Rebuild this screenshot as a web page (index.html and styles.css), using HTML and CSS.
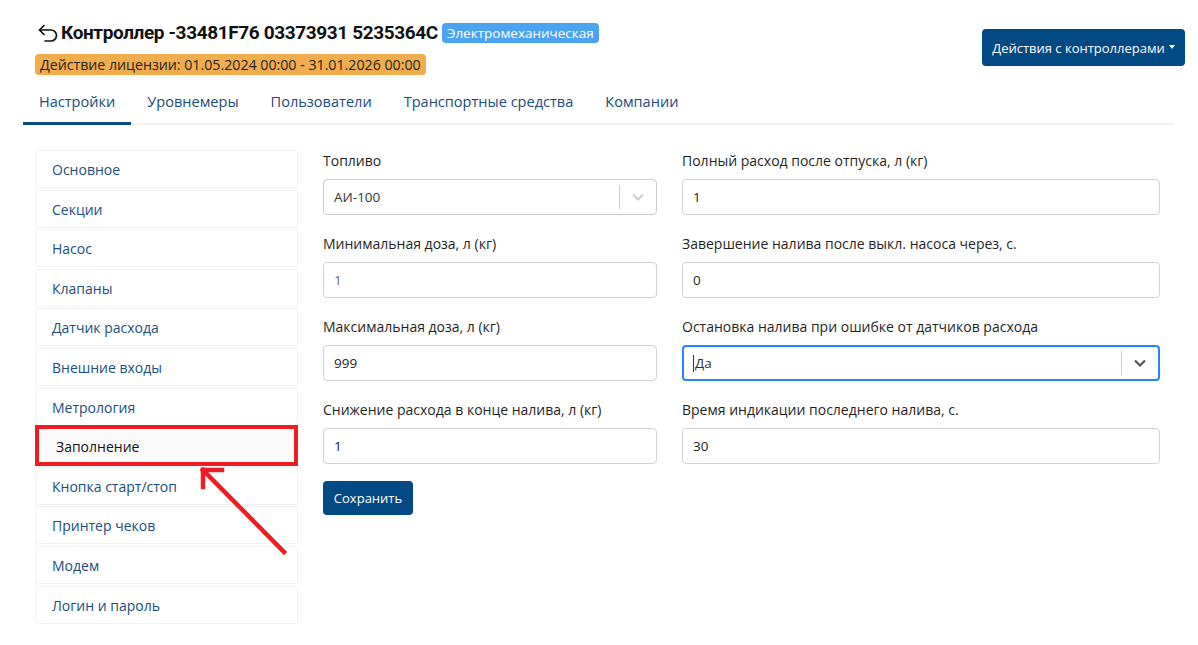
FILE: index.html
```html
<!DOCTYPE html>
<html lang="ru">
<head>
<meta charset="utf-8">
<title>Контроллер</title>
<link rel="stylesheet" href="styles.css">
</head>
<body>
<div class="page">
  <div class="header">
    <div class="header-left">
      <div class="title-row">
        <svg class="back" width="22" height="18" viewBox="0 0 22 18" fill="none" stroke="#111" stroke-width="1.7" stroke-linecap="round" stroke-linejoin="round">
          <path d="M2.5 6 H14 A5.5 5.5 0 0 1 14 17 H8"/>
          <path d="M7 1.5 L2.5 6 L7 10.5"/>
        </svg>
        <h1 class="title">Контроллер -33481F76 03373931 5235364С</h1>
        <span class="badge-type">Электромеханическая</span>
      </div>
      <div class="license">Действие лицензии: 01.05.2024 00:00 - 31.01.2026 00:00</div>
    </div>
    <button class="actions-btn">Действия с контроллерами<span class="caret"></span></button>
  </div>

  <nav class="tabs">
    <a class="tab active">Настройки</a>
    <a class="tab">Уровнемеры</a>
    <a class="tab">Пользователи</a>
    <a class="tab">Транспортные средства</a>
    <a class="tab">Компании</a>
  </nav>

  <div class="content">
    <ul class="side">
      <li class="side-item">Основное</li>
      <li class="side-item">Секции</li>
      <li class="side-item">Насос</li>
      <li class="side-item">Клапаны</li>
      <li class="side-item">Датчик расхода</li>
      <li class="side-item">Внешние входы</li>
      <li class="side-item">Метрология</li>
      <li class="side-item current">Заполнение</li>
      <li class="side-item">Кнопка старт/стоп</li>
      <li class="side-item">Принтер чеков</li>
      <li class="side-item">Модем</li>
      <li class="side-item">Логин и пароль</li>
      <li class="mark-box"></li>
      <li class="mark-arrow">
        <svg width="100" height="100" viewBox="0 0 100 100" fill="none" stroke="#ee1c25" stroke-width="4.5" stroke-linecap="square">
          <path d="M5 5 L86 87"/>
          <path d="M5 5 H24"/>
          <path d="M5 5 V22"/>
        </svg>
      </li>
    </ul>

    <form class="form">
      <div class="col col-left">
        <div class="group">
          <label class="label">Топливо</label>
          <div class="select">
            <span class="select-value">АИ-100</span>
            <span class="sep"></span>
            <svg class="chev" width="14" height="10" viewBox="0 0 14 10"><path d="M2 2.5 L7 7.5 L12 2.5" fill="none" stroke="#cccccc" stroke-width="2.2"/></svg>
          </div>
        </div>
        <div class="group">
          <label class="label">Минимальная доза, л (кг)</label>
          <div class="input muted">1</div>
        </div>
        <div class="group">
          <label class="label">Максимальная доза, л (кг)</label>
          <div class="input">999</div>
        </div>
        <div class="group">
          <label class="label">Снижение расхода в конце налива, л (кг)</label>
          <div class="input">1</div>
        </div>
        <button type="button" class="save">Сохранить</button>
      </div>
      <div class="col col-right">
        <div class="group">
          <label class="label">Полный расход после отпуска, л (кг)</label>
          <div class="input">1</div>
        </div>
        <div class="group">
          <label class="label">Завершение налива после выкл. насоса через, с.</label>
          <div class="input">0</div>
        </div>
        <div class="group">
          <label class="label">Остановка налива при ошибке от датчиков расхода</label>
          <div class="select focused">
            <span class="select-value"><span class="cursor"></span>Да</span>
            <span class="sep"></span>
            <svg class="chev" width="14" height="10" viewBox="0 0 14 10"><path d="M2 2.5 L7 7.5 L12 2.5" fill="none" stroke="#555" stroke-width="2.2"/></svg>
          </div>
        </div>
        <div class="group">
          <label class="label">Время индикации последнего налива, с.</label>
          <div class="input">30</div>
        </div>
      </div>
    </form>
  </div>
</div>
</body>
</html>
```
FILE: styles.css
```css
* { box-sizing: border-box; }
html, body { margin: 0; padding: 0; background: #fff; }
body {
  font-family: "Open Sans", "Noto Sans", sans-serif;
  font-size: 14px;
  color: #212529;
}
.page {
  padding: 0 13px 0 23px;
}
.header {
  display: flex;
  justify-content: space-between;
  align-items: flex-start;
  padding-left: 12px;
}
.header-left {
  padding-top: 20px;
}
.title-row {
  display: flex;
  align-items: center;
  height: 26px;
}
.back {
  margin: 0 2px 0 2px;
  flex: none;
}
.title {
  margin: 0;
  font-family: "Roboto", "Liberation Sans", sans-serif;
  font-weight: 700;
  font-size: 19px;
  line-height: 26px;
  color: #111;
  letter-spacing: -0.38px;
}
.badge-type {
  margin-left: 4px;
  background: #4ba3ef;
  color: #fff;
  font-size: 13.5px;
  line-height: 20px;
  padding: 0 5px;
  border-radius: 4px;
}
.license {
  display: inline-block;
  margin-top: 8px;
  background: #f0ad4e;
  color: #1f1f1f;
  font-size: 14.2px;
  line-height: 21px;
  padding: 0 5px;
  border-radius: 4px;
}
.actions-btn {
  margin-top: 29px;
  height: 37px;
  width: 203px;
  padding: 0 8px;
  background: #024a84;
  color: #fff;
  border: none;
  border-radius: 4px;
  font-family: "Open Sans", sans-serif;
  font-size: 13px;
  display: flex;
  align-items: center;
  justify-content: center;
  white-space: nowrap;
}
.caret {
  display: inline-block;
  margin-left: 4px;
  border-top: 4px solid #fff;
  border-left: 3.5px solid transparent;
  border-right: 3.5px solid transparent;
  margin-top: -2px;
}
.tabs {
  display: flex;
  margin-top: 8px;
  margin-right: 12px;
  border-bottom: 2px solid #f2f2f2;
}
.tab {
  padding: 8px 16px 10px;
  line-height: 21px;
  font-size: 14.55px;
  color: #1a4b79;
  border-bottom: 3px solid transparent;
  margin-bottom: -2px;
}
.tab.active {
  border-bottom-color: #0a4b83;
}
.content {
  display: flex;
  gap: 25px;
  margin-top: 25px;
  padding-left: 12px;
}
.side {
  list-style: none;
  margin: 0;
  padding: 0;
  width: 263px;
  flex: none;
  position: relative;
  display: flex;
  flex-direction: column;
  gap: 1.6px;
}
.side-item {
  height: 38px;
  line-height: 37px;
  padding-left: 16px;
  border: 1px solid #f2f2f2;
  border-radius: 2px;
  color: #1b4d7e;
  font-size: 14px;
}
.side-item.current {
  background: #fafafa;
  color: #111;
  padding-left: 20px;
}
.mark-box {
  position: absolute;
  left: 0;
  top: 275px;
  width: 263px;
  height: 41px;
  border: 4px solid #ee1c25;
}
.mark-arrow {
  position: absolute;
  left: 163px;
  top: 315px;
  width: 100px;
  height: 100px;
}
.mark-arrow svg { display: block; }
.form {
  display: grid;
  grid-template-columns: 334px 478px;
  column-gap: 25px;
  align-items: start;
}
.group {
  margin-bottom: 18px;
}
.label {
  display: block;
  line-height: 22px;
  margin-bottom: 7px;
  font-size: 14px;
  color: #1f1f1f;
}
.input {
  height: 36px;
  border: 1px solid #d0d4d9;
  border-radius: 4px;
  padding-left: 10px;
  line-height: 34px;
  font-size: 13.5px;
  color: #222;
}
.input.muted { color: #6b6b6b; }
.select {
  height: 36px;
  border: 1px solid #cccccc;
  border-radius: 4px;
  display: flex;
  align-items: center;
  padding-left: 10px;
  font-size: 13.5px;
  color: #333;
}
.select-value { flex: 1; display: flex; align-items: center; }
.sep {
  width: 1px;
  height: 24px;
  background: #cccccc;
}
.chev { margin: 0 11px 0 11px; }
.select.focused {
  border: 2px solid #2684ff;
  padding-left: 9px;
}
.cursor {
  display: inline-block;
  width: 1px;
  height: 17px;
  background: #333;
  margin-right: 1px;
}
.save {
  margin-top: -1px;
  height: 34px;
  width: 90px;
  background: #034a85;
  color: #fff;
  border: none;
  border-radius: 4px;
  font-family: "Open Sans", sans-serif;
  font-size: 13px;
  padding: 0;
}
```
